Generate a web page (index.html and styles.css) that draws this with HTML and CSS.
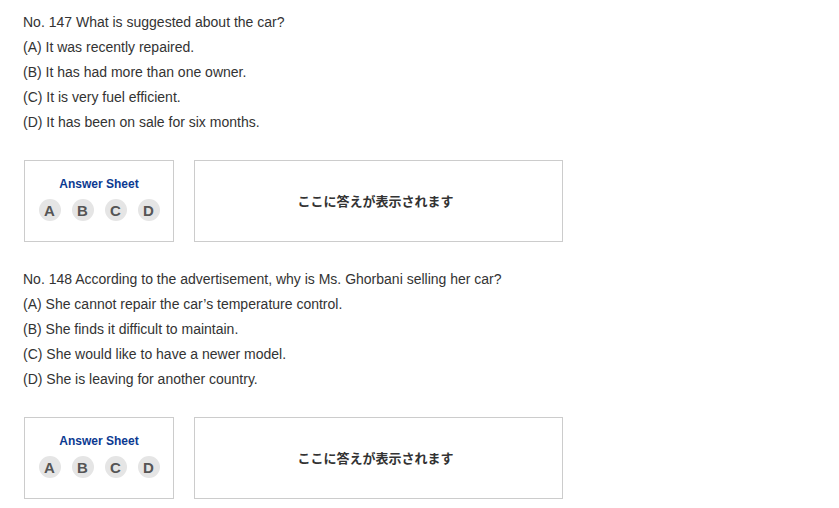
FILE: index.html
```html
<!DOCTYPE html>
<html lang="ja">
<head>
<meta charset="utf-8">
<title>Questions</title>
<link rel="stylesheet" href="styles.css">
</head>
<body>
<div class="page">
  <section class="question">
    <div class="lines">
      <p>No. 147 What is suggested about the car?</p>
      <p>(A) It was recently repaired.</p>
      <p>(B) It has had more than one owner.</p>
      <p>(C) It is very fuel efficient.</p>
      <p>(D) It has been on sale for six months.</p>
    </div>
    <div class="answer-row">
      <div class="sheet">
        <div class="sheet-title">Answer Sheet</div>
        <div class="choices">
          <span class="choice">A</span>
          <span class="choice">B</span>
          <span class="choice">C</span>
          <span class="choice">D</span>
        </div>
      </div>
      <div class="result">ここに答えが表示されます</div>
    </div>
  </section>
  <section class="question">
    <div class="lines">
      <p>No. 148 According to the advertisement, why is Ms. Ghorbani selling her car?</p>
      <p>(A) She cannot repair the car’s temperature control.</p>
      <p>(B) She finds it difficult to maintain.</p>
      <p>(C) She would like to have a newer model.</p>
      <p>(D) She is leaving for another country.</p>
    </div>
    <div class="answer-row">
      <div class="sheet">
        <div class="sheet-title">Answer Sheet</div>
        <div class="choices">
          <span class="choice">A</span>
          <span class="choice">B</span>
          <span class="choice">C</span>
          <span class="choice">D</span>
        </div>
      </div>
      <div class="result">ここに答えが表示されます</div>
    </div>
  </section>
</div>
</body>
</html>
```
FILE: styles.css
```css
* { box-sizing: border-box; }
html, body { margin: 0; padding: 0; background: #fff; }
body {
  font-family: "Liberation Sans", Arial, "Noto Sans CJK JP", sans-serif;
  font-size: 14px;
  color: #333;
}
.page {
  padding: 10px 0 0 23px;
}
.question {
  display: flex;
  flex-direction: column;
  gap: 25px;
  margin-bottom: 25px;
}
.lines p {
  margin: 0;
  line-height: 25px;
}
.answer-row {
  display: flex;
  gap: 20px;
  padding-left: 1px;
}
.sheet {
  width: 150px;
  height: 82px;
  border: 1px solid #ccc;
  display: flex;
  flex-direction: column;
  align-items: center;
  padding-top: 15px;
}
.sheet-title {
  font-size: 12px;
  font-weight: bold;
  color: #0b3a91;
  line-height: 16px;
}
.choices {
  display: flex;
  gap: 11px;
  margin-top: 7px;
}
.choice {
  width: 22px;
  height: 22px;
  border-radius: 50%;
  background: #e5e5e5;
  color: #555;
  font-weight: bold;
  font-size: 15px;
  display: flex;
  align-items: center;
  justify-content: center;
}
.result {
  width: 369px;
  height: 82px;
  border: 1px solid #ccc;
  display: flex;
  align-items: center;
  justify-content: center;
  font-family: "Noto Sans CJK JP", sans-serif;
  font-weight: bold;
  font-size: 13px;
  color: #333;
  padding: 0 6px 2px 0;
}
```
